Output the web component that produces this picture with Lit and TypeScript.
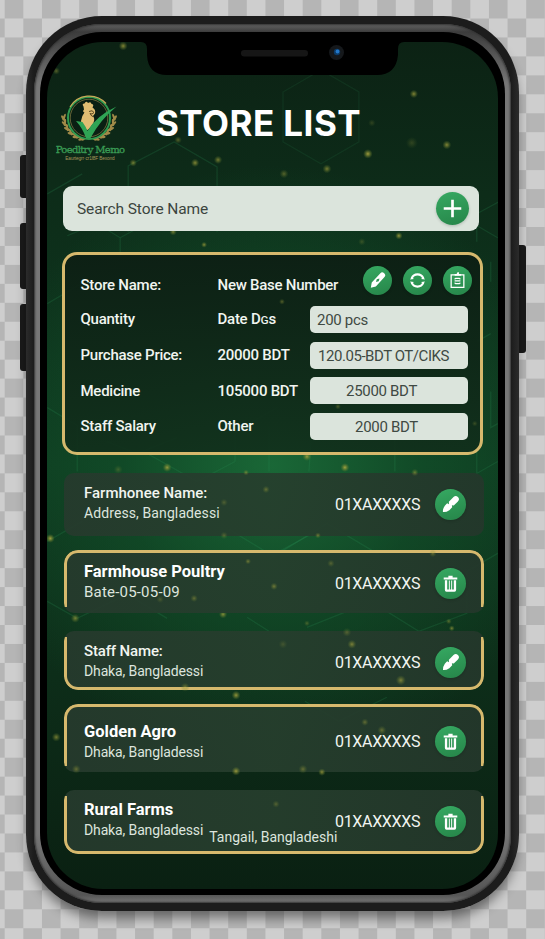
import { LitElement, html, css, svg, nothing } from "lit";
import { customElement, property } from "lit/decorators.js";

type IconName = "edit" | "pencil" | "sync" | "board" | "trash" | "plus";

const glyphs = {
  edit: svg`
    <g transform="rotate(45 16 16)">
      <path d="M12.800 8.400Q12.800 5.200 16 5.200T19.200 8.400V14.400L17.600 15.600L19.300 16.800V21Q18.500 25.200 16 27Q13.500 25.200 12.700 21V17.600L14.800 17L12.800 15.200Z" />
    </g>`,
  pencil: svg`
    <g transform="rotate(43 16 16)">
      <path fill-rule="evenodd" d="M12.900 8Q12.900 5.200 16 5.200T19.100 8V22L16 26.800L12.900 22ZM16 12.800L14.500 15.600L16 18.400L17.500 15.600Z" />
    </g>`,
  sync: svg`
    <g fill="none" stroke="#fff" stroke-width="2.3">
      <path d="M9.600 13.600A6.900 6.900 0 0 1 22.400 13.600" />
      <path d="M9.600 18.400A6.900 6.900 0 0 0 22.400 18.400" />
    </g>
    <path d="M7.800 14.800L9.600 11.800L12 14.400ZM24.200 14.800L22.400 11.800L20 14.400ZM7.800 17.200L9.600 20.200L12 17.600ZM24.200 17.200L22.400 20.200L20 17.600Z" />`,
  board: svg`
    <g fill="none" stroke="#fff" stroke-width="1.4">
      <path d="M9 9.800H23V23.600H9Z" />
      <path d="M12.800 14.600L14 13.600H18L19.200 14.600M12.800 16.400H19.200M12.800 18.400L14 19.400H18L19.200 18.400" stroke-width="1.300" />
    </g>
    <path d="M12.800 8.800H15L16 7H17.600V8.800H20V10.800H12.800Z" />`,
  trash: svg`
    <path d="M9 9.800H13.800V8H18.200V9.800H23V11.900H9Z" />
    <path d="M10.200 12.600H12.600V22.200H14.300V13H15.300V22.200H16.700V13H17.700V22.200H19.400V12.600H21.800V22.800Q21.800 24.400 20.200 24.400H11.800Q10.200 24.400 10.200 22.800Z" />`,
  plus: svg`<path d="M14.700 7.500H17.300V14.700H24.500V17.300H17.300V24.500H14.700V17.300H7.500V14.700H14.700Z" />`,
};

@customElement("round-button")
class RoundButton extends LitElement {
  @property() icon: IconName = "plus";

  static styles = css`
    :host {
      display: block;
      flex: none;
      border-radius: 50%;
      background: linear-gradient(165deg, #36a962, #268549);
      box-shadow: 0 1px 3px rgba(0, 20, 8, 0.2);
    }
    svg {
      display: block;
      width: 100%;
      height: 100%;
      fill: #fff;
    }
  `;

  render() {
    return html`<svg viewBox="0 0 32 32">${glyphs[this.icon]}</svg>`;
  }
}

@customElement("brand-logo")
class BrandLogo extends LitElement {
  static styles = css`
    :host {
      display: flex;
      flex-direction: column;
      align-items: center;
      width: 72px;
    }
    svg {
      display: block;
      width: 60px;
      height: 50px;
      margin-right: 3px;
    }
    .name {
      font: 10px/12px "DejaVu Serif", serif;
      -webkit-text-stroke: 0.3px #3a9c55;
      color: #3a9c55;
      white-space: nowrap;
      letter-spacing: -0.65px;
    }
    .tag {
      font: 4.700px/6px "Liberation Sans", sans-serif;
      letter-spacing: -0.100px;
      color: #a8975a;
      white-space: nowrap;
    }
  `;

  render() {
    const leaves = [0, 1, 2, 3, 4, 5];
    const branch = leaves.map((i) => {
      const t = 176 - i * 14;
      const a = (t * Math.PI) / 180;
      const x = 30 + 25.5 * Math.cos(a);
      const y = 23 + 23 * Math.sin(a);
      return svg`<ellipse cx=${x} cy=${y} rx="3.8" ry="1.3" transform="rotate(${t + 60} ${x} ${y})" />
        <ellipse cx=${x + 1.6} cy=${y} rx="3.6" ry="1.1" transform="rotate(${t + 115} ${x} ${y})" />`;
    });
    return html`
      <svg viewBox="0 0 60 50">
        <g fill="#a08a48">
          <g>${branch}</g>
          <g transform="matrix(-1 0 0 1 60 0)">${branch}</g>
        </g>
        <circle cx="30" cy="24" r="21" fill="#0a1f13" stroke="#2f9a50" stroke-width="2" />
        <path d="M11 13A22.500 22.500 0 0 1 47 9.500" fill="none" stroke="#c9a957" stroke-width="1.200" />
        <circle cx="30" cy="24" r="18.800" fill="none" stroke="#8c8446" stroke-width="0.700" />
        <path
          d="M24.500 12.500Q22.500 9.500 25.500 9.500Q27 6.500 29 9Q32 7 32.500 10Q35.500 10 33.500 13.500Q37 15.500 36 19.500L34 22Q37 26 33 31Q29 36.500 28 36Q22 33 22 27Q22.500 22 25.500 18.500Q23 17.500 25 15.500Z"
          fill="#e0bd72"
        />
        <path d="M30 17.500Q33.500 15.500 35 18.500Q33 21 31 19.500Q33 23 34 22.500" fill="none" stroke="#5b4a20" stroke-width="1" />
        <path d="M17 27L23.500 28Q27 33 28.500 37Q37 22 57.500 12.500Q41 26 31.500 44H27Q23.500 34 17 27Z" fill="#2fa455" />
      </svg>
      <div class="name">Poedltry Memo</div>
      <div class="tag">Eaurtegrr·cr1f8F Bexond</div>
    `;
  }
}

interface Entry {
  kind: string;
  name: string;
  detail: string;
  extra?: string;
  icon: IconName;
}

const entries: Entry[] = [
  { kind: "plain", name: "Farmhonee Name:", detail: "Address, Bangladessi", icon: "edit" },
  { kind: "top farm", name: "Farmhouse Poultry", detail: "Bate-05-05-09", icon: "trash" },
  { kind: "bottom staff", name: "Staff Name:", detail: "Dhaka, Bangladessi", icon: "edit" },
  { kind: "top agro", name: "Golden Agro", detail: "Dhaka, Bangladessi", icon: "trash" },
  { kind: "bottom rural", name: "Rural Farms", detail: "Dhaka, Bangladessi", extra: "Tangail, Bangladeshi", icon: "trash" },
];

const fields = [
  { label: "Quantity", value: "Date Dɢs", input: "200 pcs", cls: "f1" },
  { label: "Purchase Price:", value: "20000 BDT", input: "120.05-BDT OT/CIKS", cls: "f2" },
  { label: "Medicine", value: "105000 BDT", input: "25000 BDT", cls: "f3" },
  { label: "Staff Salary", value: "Other", input: "2000 BDT", cls: "f4" },
];

// x, y, radius, opacity of the glowing specks, in screen coordinates
const sparks: number[][] = [
  [76, 4, 3, 0.8], [9, 29, 2.5, 0.5], [131, 98, 2.5, 0.5], [86, 121, 2.5, 0.7], [148, 121, 2.8, 0.8], [171, 118, 2.8, 0.7],
  [367, 52, 2.8, 0.8], [325, 81, 2.5, 0.25], [365, 101, 4, 0.25], [400, 103, 3, 0.8], [321, 112, 3.2, 1], [280, 127, 3, 0.7],
  [237, 132, 3, 0.5], [126, 190, 2.5, 0.7], [157, 203, 2, 0.8], [352, 194, 2.5, 0.9], [315, 200, 2.5, 0.3],
  [260, 415, 3, 0.9], [120, 426, 3, 0.9], [71, 428, 3, 0.3], [298, 426, 3, 1], [3, 497, 3, 1],
  [176, 573, 2.8, 0.8], [28, 577, 3, 0.7], [402, 580, 2, 0.5], [405, 587, 2, 0.7], [260, 582, 2, 0.4],
  [189, 654, 3, 0.9], [9, 696, 3, 0.7],
];

// specks that float in front of the cards
const frontSparks: number[][] = [
  [235, 260, 2, 0.5], [199, 431, 2, 0.6], [368, 431, 2.5, 0.6], [219, 448, 2.5, 0.5], [177, 461, 2.5, 0.35],
  [177, 494, 2.5, 0.4], [271, 494, 2, 0.6], [201, 520, 2, 0.6], [284, 522, 2.5, 0.4], [386, 512, 2.5, 0.5],
  [227, 545, 2.5, 0.6], [147, 557, 2.5, 0.5], [113, 558, 2.5, 0.3], [300, 591, 3, 0.4], [305, 603, 3, 0.7],
  [236, 603, 3, 0.25], [354, 639, 3.4, 0.7], [138, 646, 3, 0.6], [318, 681, 2.5, 0.5], [335, 689, 3, 0.5],
  [29, 728, 3, 0.5], [189, 730, 3, 0.9], [256, 728, 3, 0.5], [275, 731, 2.5, 0.8], [229, 763, 2.5, 0.4],
  [291, 365, 2, 0.4], [428, 382, 2, 0.3],
];

@customElement("app-root")
class AppRoot extends LitElement {
  static styles = css`
    :host {
      display: block;
      isolation: isolate;
      width: 545px;
      height: 939px;
      overflow: hidden;
      box-sizing: border-box;
      padding: 15.500px 26px 0;
      font-family: Roboto, sans-serif;
      color: #f1f5f0;
      background: conic-gradient(#b5b5b5 25%, #cecece 0 50%, #b5b5b5 0 75%, #cecece 0) 4.7px 18.5px / 37.26px 37.92px;
    }
    * {
      box-sizing: border-box;
    }
    .phone {
      position: relative;
      width: 493px;
      height: 895px;
      padding: 8px;
      border-radius: 76px;
      background: linear-gradient(90deg, #2b2b2b, #1c1c1c 8px calc(100% - 8px), #2b2b2b);
      box-shadow: 0 9px 12px -2px rgba(0, 0, 0, 0.45);
    }
    .key {
      position: absolute;
      z-index: -1;
      width: 12px;
      border-radius: 3px;
      background: #1a1a1a;
    }
    .key.mute { left: -6px; top: 139.500px; height: 43px; }
    .key.up { left: -6px; top: 207.500px; height: 66px; }
    .key.down { left: -6px; top: 288.500px; height: 67px; }
    .key.power { right: -7px; top: 229.500px; height: 108px; }
    .rim {
      height: 100%;
      padding: 8px 6px;
      border-radius: 68px;
      background: linear-gradient(#646464, #3c3c3c 8px, #777 60px, #777 calc(100% - 70px), #555 calc(100% - 8px), #777);
      box-shadow: inset 0 0 2px 1px #333;
    }
    .glass {
      height: 100%;
      padding: 10px 7px 6px;
      border-radius: 62px;
      background: #000;
    }
    .screen {
      position: relative;
      height: 100%;
      overflow: hidden;
      border-radius: 56px;
      padding: 44.500px 14px 0 16px;
      display: flex;
      flex-direction: column;
      background:
        radial-gradient(ellipse 300px 300px at 50% 50%, rgba(27, 108, 57, 0.9), rgba(20, 88, 46, 0.5) 50%, transparent),
        linear-gradient(#0c2214, #0d2c19 18%, #0e3b20 50%, #0d2d19 75%, #0a2012);
    }
    .decor {
      position: absolute;
      inset: 0;
      width: 100%;
      height: 100%;
      pointer-events: none;
    }
    .notch {
      position: absolute;
      top: -0.500px;
      left: 94px;
      width: 263px;
      height: 34px;
      fill: #000;
    }
    header {
      position: relative;
      display: flex;
      flex: none;
      height: 100px;
    }
    brand-logo {
      margin: 8px 0 0 -9px;
    }
    h1 {
      margin: 15.500px 0 0 30px;
      font: 700 35px/42px Inter, sans-serif;
      letter-spacing: 0.450px;
      color: #fff;
      white-space: nowrap;
    }
    .search {
      position: relative;
      flex: none;
      display: flex;
      align-items: center;
      justify-content: space-between;
      width: 416px;
      height: 45px;
      padding: 0 10px 0 14px;
      border-radius: 9px;
      background: #dbe4dc;
      color: #3b443e;
      font-size: 15.5px;
      letter-spacing: -0.100px;
    }
    .search round-button {
      width: 33px;
      height: 33px;
    }
    .card {
      position: relative;
      flex: none;
      width: 421px;
      height: 203px;
      margin: 21px 0 0 -1px;
      padding: 12.500px 12px 0 15.500px;
      border: 3px solid #d6b96d;
      border-radius: 15px;
      background: linear-gradient(rgba(13, 31, 20, 0.95), rgba(17, 46, 27, 0.9));
      display: grid;
      grid-template-columns: 137px 92.500px 158px;
      grid-template-rows: 34px repeat(4, 35.700px);
      align-items: center;
      font-size: 15px;
      white-space: nowrap;
    }
    .label {
      font-weight: 500;
      letter-spacing: -0.250px;
    }
    .actions {
      display: flex;
      gap: 11px;
      justify-content: flex-end;
      margin: -8px -4px 0 0;
    }
    .actions round-button {
      width: 29px;
      height: 29px;
    }
    .field {
      height: 27px;
      line-height: 28px;
      border-radius: 5px;
      background: #dbe4dc;
      color: #3f4a43;
      letter-spacing: -0.300px;
    }
    .f1 { padding-left: 7px; }
    .f2 { padding-left: 8px; letter-spacing: -0.450px; }
    .f3 { padding-left: 36px; }
    .f4 { padding-left: 45px; }
    .entry {
      position: relative;
      flex: none;
      display: flex;
      align-items: flex-start;
      width: 420px;
      height: 63px;
      margin-left: 0.500px;
      padding: 15.500px 18px 0 20.500px;
      border-radius: 10px;
      overflow: hidden;
      background: linear-gradient(90deg, rgba(38, 58, 45, 0.93), rgba(38, 62, 45, 0.93) 50%, rgba(36, 55, 43, 0.93));
    }
    .entry::before {
      position: absolute;
      left: 0;
      right: 0;
      border: 3px solid #d6b96d;
    }
    .top { border-radius: 14px 14px 10px 10px; }
    .top::before {
      content: "";
      top: 0;
      bottom: 6px;
      border-bottom: 0;
      border-radius: 14px 14px 0 0;
    }
    .bottom { border-radius: 10px 10px 14px 14px; }
    .bottom::before {
      content: "";
      top: 6px;
      bottom: 0;
      border-top: 0;
      border-radius: 0 0 14px 14px;
    }
    .plain { margin-top: 18px; }
    .farm { margin-top: 14px; padding-top: 17.500px; }
    .staff { margin-top: 18px; height: 59px; }
    .agro { margin-top: 14px; height: 68px; padding-top: 22px; }
    .rural { margin-top: 18px; height: 64px; }
    .who {
      width: 251px;
      height: 31px;
      display: flex;
      flex-direction: column;
      justify-content: center;
      margin-top: -1px;
      white-space: nowrap;
    }
    .farm .who { margin-top: -1.500px; }
    .agro .who { margin-top: 0; }
    .name {
      font-size: 15px;
      line-height: 20.500px;
      font-weight: 500;
      letter-spacing: -0.150px;
    }
    .plain .name { letter-spacing: 0; }
    .farm .name, .agro .name, .rural .name {
      font-size: 16.500px;
      line-height: 20px;
      font-weight: 700;
      letter-spacing: 0;
      color: #fff;
    }
    .detail {
      display: flex;
      gap: 6px;
      font-size: 14px;
      line-height: 20px;
      letter-spacing: -0.130px;
      color: #dde5de;
    }
    .plain .detail { letter-spacing: 0.100px; }
    .farm .detail { font-size: 15px; letter-spacing: 0.200px; }
    .extra {
      margin: 7px 0 -7px;
      letter-spacing: 0;
    }
    .tel {
      flex: 1;
      font-size: 16px;
      line-height: 32px;
      letter-spacing: -0.330px;
    }
    .entry round-button {
      width: 31px;
      height: 31px;
    }
  `;

  private specks(list: number[][]) {
    return list.map(([x, y, r, o]) => svg`<circle cx=${x} cy=${y} r=${r * 1.5} fill="url(#glow)" opacity=${o * 0.85} />`);
  }

  private glow() {
    return svg`
      <defs>
        <radialGradient id="glow">
          <stop offset="0" stop-color="#b9b145" />
          <stop offset="0.4" stop-color="#8f9436" stop-opacity="0.7" />
          <stop offset="1" stop-color="#5f7a2c" stop-opacity="0" />
        </radialGradient>
      </defs>`;
  }

  private decor() {
    return html`
      <svg class="decor" viewBox="0 0 451 848">
        ${this.glow()}
        <g fill="none" stroke="#2f9659" stroke-opacity="0.2" stroke-width="1.3">
          <path d="M81 190V124L127 100L170 125V190M0 152L35 132M20 194L34 188H60L73 196V215M73 196L95 184" />
          <path d="M0 262L34 242M0 366L30 384V430M0 500L35 480M0 560L30 577L80 553L120 577" />
          <path d="M236 50L274 28L312 50V100L274 122L236 100Z" stroke-opacity="0.120" />
          <path d="M188 420V390L230 366M188 420L150 440L100 412M182 488L225 514L262 494M222 385V430M262 430L265 384L298 366L348 395V430" />
          <path d="M222 518L280 482L330 512M451 420L430 432V400M451 382L444 386V350M430 200V172L452 160M396 184L413 174L451 196M444 240V220M430 300L444 292" />
          <path d="M260 586L300 570H340L372 590L420 572V530L451 512M258 660L292 680L340 656M60 400L90 412L130 396M222 590L200 576" />
        </g>
        ${this.specks(sparks)}
      </svg>
    `;
  }

  render() {
    return html`
      <div class="phone">
        <div class="key mute"></div>
        <div class="key up"></div>
        <div class="key down"></div>
        <div class="key power"></div>
        <div class="rim">
          <div class="glass">
            <div class="screen">
              ${this.decor()}
              <svg class="notch" viewBox="0 0 263 34">
                <path d="M0 0H263V1Q257 1 257 8V14Q255 34 236 34H26Q7 34 6 14V8Q6 1 0 1Z" />
                <rect x="100" y="9" width="67" height="6.500" rx="3.200" fill="#161616" />
                <circle cx="195.500" cy="11.500" r="7.500" fill="#15181b" />
                <circle cx="196" cy="11" r="3.200" fill="#0c3a66" />
                <circle cx="196.500" cy="10.500" r="1.900" fill="#2377c8" />
              </svg>
              <header>
                <brand-logo></brand-logo>
                <h1>STORE LIST</h1>
              </header>
              <div class="search">
                <span>Search Store Name</span>
                <round-button icon="plus"></round-button>
              </div>
              <section class="card">
                <span class="label">Store Name:</span>
                <span class="label">New Base Number</span>
                <div class="actions">
                  <round-button icon="pencil"></round-button>
                  <round-button icon="sync"></round-button>
                  <round-button icon="board"></round-button>
                </div>
                ${fields.map(
                  (f) => html`
                    <span class="label">${f.label}</span>
                    <span class="label">${f.value}</span>
                    <div class="field ${f.cls}">${f.input}</div>
                  `,
                )}
              </section>
              ${entries.map(
                (e) => html`
                  <article class="entry ${e.kind}">
                    <div class="who">
                      <div class="name">${e.name}</div>
                      <div class="detail">
                        <span>${e.detail}</span>
                        ${e.extra ? html`<span class="extra">${e.extra}</span>` : nothing}
                      </div>
                    </div>
                    <span class="tel">01XAXXXXS</span>
                    <round-button icon=${e.icon}></round-button>
                  </article>
                `,
              )}
              <svg class="decor" viewBox="0 0 451 848">${this.glow()}${this.specks(frontSparks)}</svg>
            </div>
          </div>
        </div>
      </div>
    `;
  }
}
